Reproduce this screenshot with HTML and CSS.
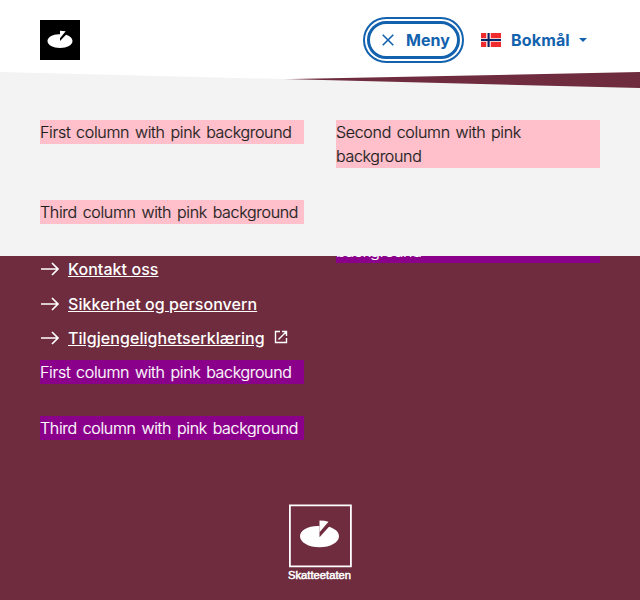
FILE: index.html
```html
<!DOCTYPE html>
<html lang="nb">
<head>
<meta charset="utf-8">
<title>Skatteetaten</title>
<link rel="stylesheet" href="styles.css">
</head>
<body>
<header class="header">
  <a class="logo" href="#" aria-label="Skatteetaten">
    <svg width="40" height="40" viewBox="0 0 40 40"><rect width="40" height="40"/><g fill="#fff"><path d="M20 21V14.2C13 13.8 7.5 17 7.5 21C7.5 24.8 13 28 20 28S32.500 24.8 32.500 21C32.500 18.200 29.800 16 26 14.800Z"/><path d="M20 10.700Q23 10.700 25.700 11.300L20 18.200Z"/></g></svg>
  </a>
  <button class="menu-button" type="button">
    <svg width="20" height="20" viewBox="0 0 20 20"><path d="M4.700 4.700l10.600 10.600M15.300 4.700L4.700 15.300" stroke="currentColor" stroke-width="1.600" fill="none"/></svg>
    <span>Meny</span>
  </button>
  <button class="language-button" type="button">
    <svg width="20" height="14" viewBox="0 0 20 14"><path fill="#ef2b2d" d="M0 0h20v14H0z"/><path fill="#fff" fill-opacity=".75" d="M5 0h5v14H5zM0 5h20v4H0z"/><path fill="#002868" d="M6.600 0h2v14h-2zM0 6h20v2H0z"/></svg>
    <span>Bokmål</span>
    <svg class="caret" width="8" height="4" viewBox="0 0 8 4"><path fill="currentColor" d="M0 0h8L4 4z"/></svg>
  </button>
</header>
<nav class="menu">
  <p class="pink">First column with pink background</p>
  <p class="pink">Second column with pink background</p>
  <p class="pink">Third column with pink background</p>
</nav>
<footer class="footer">
  <div class="columns">
    <div>
      <ul class="links">
        <li><svg class="arrow" viewBox="0 0 20 16"><path d="M1 8h17M12 2l6 6-6 6"/></svg><a href="#">Kontakt oss</a></li>
        <li><svg class="arrow" viewBox="0 0 20 16"><path d="M1 8h17M12 2l6 6-6 6"/></svg><a href="#">Sikkerhet og personvern</a></li>
        <li><svg class="arrow" viewBox="0 0 20 16"><path d="M1 8h17M12 2l6 6-6 6"/></svg><a href="#">Tilgjengelighetserklæring</a><svg class="external" viewBox="0 0 14 14"><path d="M6 1.500H1.500v11h11V8M8 1.500h4.500V6M12.500 1.500L4.500 9.500"/></svg></li>
      </ul>
      <p class="purple">First column with pink background</p>
      <p class="purple third">Third column with pink background</p>
    </div>
    <p class="purple second">Second column with pink background</p>
  </div>
  <svg class="footer-logo" width="64" height="78" viewBox="0 0 64 78"><path d="M1.900 2.400h61v61h-61z" fill="none" stroke="#fff" stroke-width="1.800"/><g fill="#fff"><path d="M31.500 34.300V23C20.500 22.500 12 27 12 33.300C12 39.500 20.700 44.300 31.500 44.300S51 39.500 51 33.300C51 29 47 25.700 41 23.800Z"/><path d="M31.500 17.600Q36.500 17.600 40.500 18.800L31.500 29.300Z"/></g><text x="0" y="76.200" textLength="63" lengthAdjust="spacingAndGlyphs">Skatteetaten</text></svg>
</footer>
</body>
</html>
```
FILE: styles.css
```css
* { box-sizing: border-box; }
body {
  margin: 0;
  height: 600px;
  overflow: hidden;
  background: #6e2c3e;
  color: #1d1d1d;
  font: 300 16px/24px Inter, sans-serif;
  position: relative;
}
p, ul { margin: 0; padding: 0; }
.header {
  height: 85px;
  padding: 20px 52px 0 40px;
  display: flex;
  align-items: flex-start;
  background: #fff;
  clip-path: polygon(0 0, 100% 0, 100% 72px, 0 85px);
}
.logo { height: 40px; margin-right: auto; }
.logo svg { display: block; }
button {
  height: 40px;
  display: flex;
  align-items: center;
  border: 0;
  background: #fff;
  color: #1362ae;
  font: 700 16px/24px Inter, sans-serif;
}
.menu-button {
  width: 93px;
  height: 38px;
  margin-top: 1px;
  padding: 0 7px 0 8px;
  gap: 8px;
  border: 3px solid #1362ae;
  border-radius: 20px;
  outline: 2px solid #1362ae;
  outline-offset: 2px;
}
.language-button { margin-left: 21px; padding: 0; gap: 10px; width: 107px; letter-spacing: .15px; }
.caret { margin-left: -1px; }
.menu {
  position: absolute;
  z-index: 1;
  top: 72px;
  left: 0;
  width: 100%;
  height: 184px;
  padding: 48px 40px 32px;
  display: grid;
  grid-template-columns: 1fr 1fr;
  gap: 32px;
  align-items: start;
  align-content: start;
  background: #f3f3f3;
  clip-path: polygon(0 0, 100% 16px, 100% 100%, 0 100%);
}
.pink, .purple { letter-spacing: -.32px; word-spacing: 1.600px; -webkit-text-stroke: .2px currentColor; }
.pink { background: pink; }
.purple { background: #8b008b; color: #fff; }
.footer { padding: 131px 40px 0; }
.columns { display: grid; grid-template-columns: 1fr 1fr; column-gap: 32px; align-items: start; }
.links { padding-top: 41px; height: 144px; list-style: none; }
.links li { height: 34.500px; display: flex; align-items: flex-start; color: #fff; }
.links a { color: #fff; font-weight: 500; letter-spacing: .06px; text-underline-offset: 1px; }
.arrow { width: 20px; height: 16px; margin: 4px 8px 0 0; }
.external { width: 14px; height: 14px; margin: 4px 0 0 9px; }
.arrow path, .external path { fill: none; stroke: currentColor; stroke-width: 1.700; }
.external path { stroke-width: 1.400; }
.second { margin-top: -1px; }
.third { margin-top: 32px; }
.footer-logo { display: block; margin: 63px auto 0; }
.footer-logo text { fill: #fff; stroke: #fff; stroke-width: .5px; font: 400 11px "Liberation Sans", sans-serif; }
```
